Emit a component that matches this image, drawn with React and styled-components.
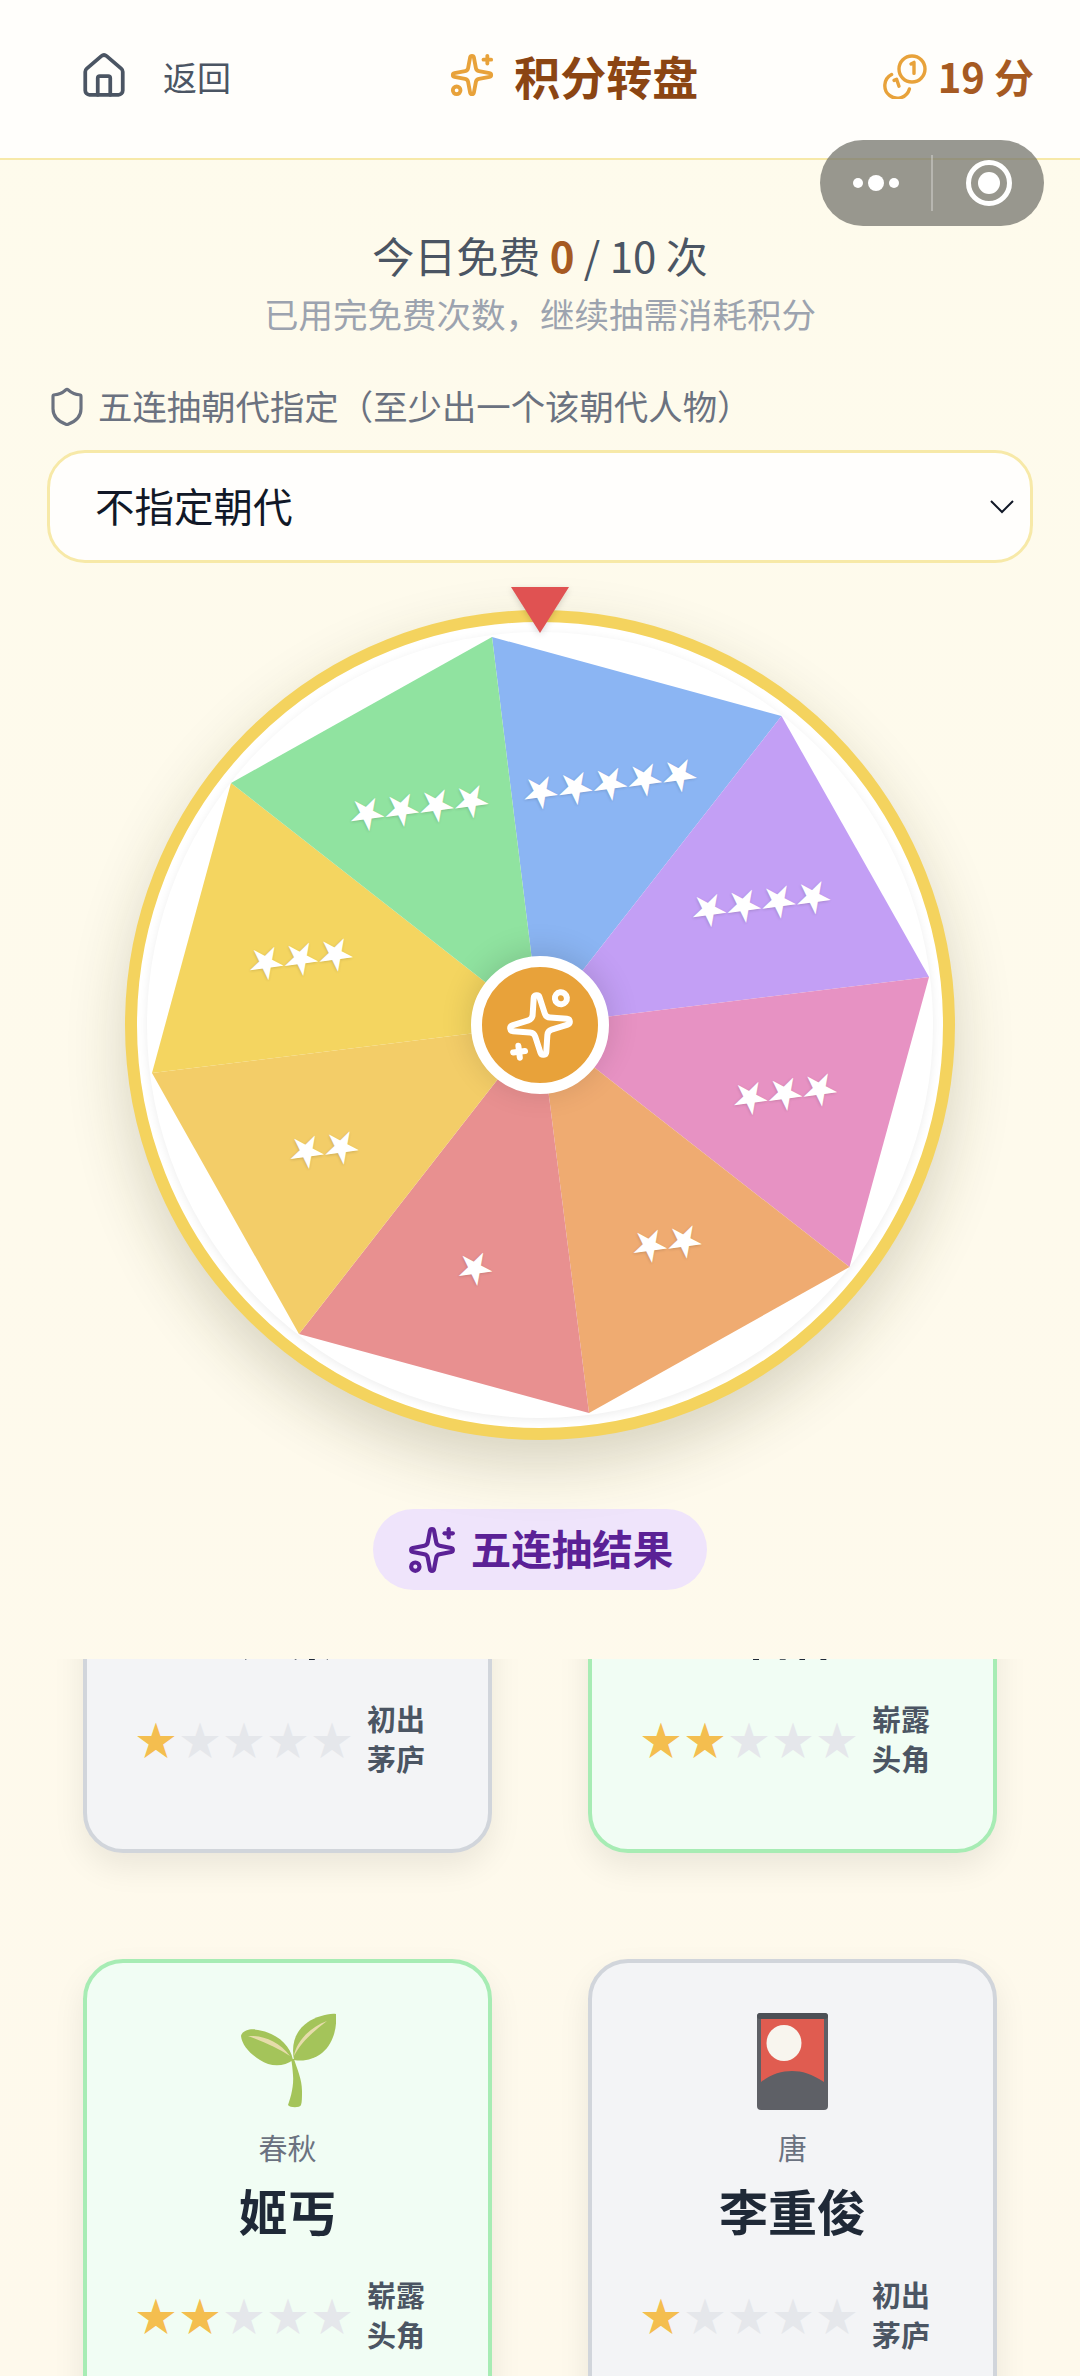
import React from "react";
import styled, { createGlobalStyle } from "styled-components";
import { House, Sparkles, Shield } from "lucide-react";

const FONT = `"Noto Sans CJK SC", "Noto Sans", sans-serif`;

const GlobalStyle = createGlobalStyle`
  html, body {
    margin: 0;
    width: 1080px;
    height: 2376px;
    overflow: hidden;
  }
  body {
    font-family: ${FONT};
    background: linear-gradient(180deg, #fefbec 0%, #fef9ec 100%);
  }
`;

const Page = styled.div`
  position: relative;
  width: 1080px;
  height: 2376px;
  display: flex;
  flex-direction: column;
  overflow: hidden;
`;

const Header = styled.header`
  box-sizing: border-box;
  height: 160px;
  padding: 0 46px 6px 79px;
  display: flex;
  align-items: center;
  justify-content: space-between;
  background: #fffefb;
  border-bottom: 2px solid #f7e9a8;
`;

const BackLink = styled.div`
  display: flex;
  align-items: center;
  gap: 34px;
  width: 186px;
  color: #4b5563;
  font-size: 34px;
  svg {
    flex: none;
  }
`;

const Title = styled.h1`
  margin: 0 0 3px;
  display: flex;
  align-items: center;
  gap: 19px;
  color: #8b4513;
  font-size: 46px;
  line-height: 60px;
  font-weight: 700;
  svg {
    color: #e8a23a;
  }
`;

const Points = styled.div`
  display: flex;
  align-items: center;
  gap: 9px;
  color: #a65a22;
  font-size: 40px;
  font-weight: 700;
  white-space: pre;
`;

const Capsule = styled.div`
  position: absolute;
  left: 820px;
  top: 140px;
  width: 224px;
  height: 86px;
  border-radius: 43px;
  background: rgba(120, 120, 112, 0.76);
  display: flex;
  align-items: center;
`;

const CapsuleSide = styled.div`
  flex: 1;
  height: 56px;
  display: flex;
  align-items: center;
  justify-content: center;
  gap: 5px;
  & + & {
    border-left: 2px solid rgba(255, 255, 255, 0.3);
  }
`;

const Dot = styled.i`
  display: block;
  border-radius: 50%;
  background: #fff;
  width: ${(p) => p.$size}px;
  height: ${(p) => p.$size}px;
`;

const Target = styled.i`
  display: block;
  box-sizing: border-box;
  width: 46px;
  height: 46px;
  border: 5px solid #fff;
  border-radius: 50%;
  position: relative;
  &::after {
    content: "";
    position: absolute;
    inset: 7px;
    border-radius: 50%;
    background: #fff;
  }
`;

const Stats = styled.section`
  padding-top: 69px;
  text-align: center;
`;

const FreeCount = styled.div`
  color: #4b5563;
  font-size: 42px;
  line-height: 52px;
  b {
    color: #a65a22;
    font-weight: 700;
  }
`;

const Hint = styled.div`
  margin-top: 8px;
  color: #9ca3af;
  font-size: 34.5px;
  line-height: 48px;
`;

const FieldLabel = styled.div`
  margin: 45px 0 0 46px;
  height: 46px;
  display: flex;
  align-items: center;
  gap: 10px;
  color: #6b7280;
  font-size: 34.4px;
  white-space: nowrap;
  svg {
    margin-top: 4px;
  }
`;

const Select = styled.div`
  box-sizing: border-box;
  margin: 22px 47px 0 47px;
  height: 113px;
  padding: 0 14px 4px 45px;
  display: flex;
  align-items: center;
  justify-content: space-between;
  background: #fffefc;
  border: 3px solid #f7e9a8;
  border-radius: 38px;
  color: #111827;
  font-size: 39.5px;
  svg {
    margin-top: 4px;
  }
`;

const WheelBox = styled.section`
  position: relative;
  margin: 47px auto 0;
  box-sizing: border-box;
  width: 830px;
  height: 830px;
  border: 12px solid #f4d35e;
  border-radius: 50%;
  background: #fff;
  box-shadow: 0 24px 60px rgba(60, 60, 20, 0.2);
`;

const Disc = styled.div`
  position: absolute;
  inset: 10px;
  border-radius: 50%;
  box-shadow: 0 2px 10px rgba(0, 0, 0, 0.07);
`;

const WheelArt = styled.svg`
  position: absolute;
  inset: -12px;
  width: 830px;
  height: 830px;
`;

const Pointer = styled.div`
  position: absolute;
  left: 374px;
  top: -35px;
  width: 0;
  height: 0;
  border-left: 29px solid transparent;
  border-right: 29px solid transparent;
  border-top: 46px solid #e05252;
  filter: drop-shadow(0 2px 3px rgba(0, 0, 0, 0.15));
`;

const SliceStars = styled.div`
  position: absolute;
  left: ${(p) => p.$x - 125 - 12 + 2.5}px;
  top: ${(p) => p.$y - 610 - 12 - 3}px;
  transform: translate(-50%, -50%) rotate(-7deg);
  display: flex;
`;

const SliceStar = styled.span`
  width: 35px;
  text-align: center;
  color: #fff;
  font-size: 36px;
  line-height: 35px;
  transform: rotate(35deg);
  text-shadow: 0 1px 3px rgba(0, 0, 0, 0.16);
`;

const Hub = styled.div`
  position: absolute;
  left: 334px;
  top: 334px;
  box-sizing: border-box;
  width: 138px;
  height: 138px;
  border: 11.5px solid #fff;
  border-radius: 50%;
  background: #e8a23a;
  color: #fff;
  display: flex;
  align-items: center;
  justify-content: center;
  box-shadow: 0 -4px 32px rgba(0, 0, 0, 0.14);
  svg {
    transform: rotate(173deg);
  }
`;

const ResultTag = styled.div`
  margin: 69px auto 0;
  box-sizing: border-box;
  width: 334px;
  height: 81px;
  padding-bottom: 4px;
  display: flex;
  align-items: center;
  justify-content: center;
  gap: 14px;
  background: #efe4fb;
  border-radius: 41px;
  color: #5b2196;
  font-size: 40.5px;
  font-weight: 700;
  svg {
    margin-top: 4px;
  }
`;

const ScrollArea = styled.div`
  flex: 1;
  margin-top: 69px;
  overflow: hidden;
`;

const CardGrid = styled.div`
  margin-top: -276px;
  padding: 0 83px;
  display: grid;
  grid-template-columns: 409px 409px;
  column-gap: 96px;
  row-gap: 106px;
`;

const Card = styled.article`
  box-sizing: border-box;
  height: 470px;
  padding-top: 50px;
  display: flex;
  flex-direction: column;
  align-items: center;
  border-radius: 40px;
  border: 4px solid ${(p) => (p.$tier === 2 ? "#a7ecb4" : "#d1d5db")};
  background: ${(p) => (p.$tier === 2 ? "#f1fdf4" : "#f3f4f6")};
  box-shadow: 0 14px 32px rgba(0, 0, 0, 0.08);
`;

const CardArt = styled.div`
  height: 96px;
  display: flex;
  align-items: center;
  justify-content: center;
`;

const Era = styled.div`
  margin-top: 18px;
  color: #6b7280;
  font-size: 29px;
  line-height: 40px;
`;

const Name = styled.div`
  margin-top: 11px;
  color: #1f2937;
  font-size: 49px;
  line-height: 64px;
  font-weight: 700;
`;

const Rating = styled.div`
  margin: 32px 14px 0 0;
  height: 80px;
  display: flex;
  align-items: center;
  gap: 13px;
`;

const StarRow = styled.div`
  display: flex;
`;

const Star = styled.span`
  width: 44px;
  text-align: center;
  color: ${(p) => (p.$on ? "#f4be4f" : "#e5e7eb")};
  font-size: 40px;
  line-height: 44px;
`;

const Rank = styled.div`
  width: 60px;
  color: #4b5563;
  font-size: 29px;
  line-height: 40px;
  font-weight: 700;
`;

const Coins = () => (
  <svg width="46" height="46" viewBox="0 0 46 46" fill="none" stroke="#e8a23a" strokeWidth="3.4" strokeLinecap="round" strokeLinejoin="round">
    <circle cx="29" cy="16" r="13" />
    <path d="M28 11l3-1.6 0 11" />
    <path d="M8.6 21.6A12.5 12.5 0 1 0 26.4 36" />
    <path d="M11 27.4l2.6-1.2 2.4 7" />
  </svg>
);

const Sprout = () => (
  <svg width="96" height="96" viewBox="0 0 96 96">
    <path d="M54 46c3 10 8 20 8 32 0 6 0 11-1 14-1 3-11 3-13 0 3-8 6-20 5-30-.4-6-1-12-2-16z" fill="#a4c45a" />
    <path d="M53 47C44 54 30 54 20 47 10 41 2 32 1 23c1-5 9-8 17-6 18 3 32 14 35 30z" fill="#a4c45a" />
    <path d="M54 47c-3-16 1-29 14-38 8-5 20-9 28-8 1 13-2 29-14 39-8 6-18 9-28 7z" fill="#a4c45a" />
    <path d="M8 23c14-1 31 5 42 20-12-8-26-14-42-20z" fill="#e6dcaa" />
    <path d="M54 43c2-13 14-28 33-35-13 10-26 21-33 35z" fill="#e6dcaa" />
  </svg>
);

const FlowerCard = () => (
  <svg width="71" height="97" viewBox="0 0 71 97">
    <rect width="71" height="97" rx="4" fill="#5e6066" />
    <rect y="0" width="71" height="6" rx="3" fill="#4c5056" />
    <path d="M4 6h63v63c-12-8-22-11-32-11S14 61 4 69z" fill="#e05c50" />
    <ellipse cx="27" cy="30" rx="17.5" ry="18" fill="#f8f5ee" />
  </svg>
);

const wheelCenter = "540,1025";
const slices = [
  { pts: "492,637 781.5,716", fill: "#8bb5f3" },
  { pts: "781.5,716 929,977", fill: "#c39ff5" },
  { pts: "929,977 849.5,1267", fill: "#e792c3" },
  { pts: "849.5,1267 589,1413", fill: "#efab71" },
  { pts: "589,1413 299,1334", fill: "#e89090" },
  { pts: "299,1334 152,1073", fill: "#f3cd68" },
  { pts: "152,1073 231,783", fill: "#f4d560" },
  { pts: "231,783 492,637", fill: "#90e3a0" },
];

const sliceStars = [
  { x: 608, y: 783, n: 5 },
  { x: 759, y: 903, n: 4 },
  { x: 783, y: 1093, n: 3 },
  { x: 665, y: 1243, n: 2 },
  { x: 473.5, y: 1268, n: 1 },
  { x: 322, y: 1149, n: 2 },
  { x: 299, y: 958, n: 3 },
  { x: 417, y: 807, n: 4 },
];

const cards = [
  { name: "苏秦", era: "战国", stars: 1, rank: "初出茅庐", art: null },
  { name: "管仲", era: "春秋", stars: 2, rank: "崭露头角", art: null },
  { name: "姬丐", era: "春秋", stars: 2, rank: "崭露头角", art: <Sprout /> },
  { name: "李重俊", era: "唐", stars: 1, rank: "初出茅庐", art: <FlowerCard /> },
];

export default function App() {
  return (
    <Page>
      <GlobalStyle />
      <Header>
        <BackLink>
          <House size={50} strokeWidth={1.8} />
          返回
        </BackLink>
        <Title>
          <Sparkles size={46} strokeWidth={2} />
          积分转盘
        </Title>
        <Points>
          <Coins />
          19 分
        </Points>
      </Header>
      <Capsule>
        <CapsuleSide>
          <Dot $size={10} />
          <Dot $size={16} />
          <Dot $size={10} />
        </CapsuleSide>
        <CapsuleSide>
          <Target />
        </CapsuleSide>
      </Capsule>

      <Stats>
        <FreeCount>
          今日免费 <b>0</b> / 10 次
        </FreeCount>
        <Hint>已用完免费次数，继续抽需消耗积分</Hint>
      </Stats>

      <FieldLabel>
        <Shield size={42} strokeWidth={1.8} />
        五连抽朝代指定（至少出一个该朝代人物）
      </FieldLabel>
      <Select>
        不指定朝代
        <svg width="28" height="16" viewBox="0 0 28 16" fill="none" stroke="#111827" strokeWidth="2">
          <path d="M3 2l11 11L25 2" />
        </svg>
      </Select>

      <WheelBox>
        <Disc />
        <WheelArt viewBox="125 610 830 830">
          {slices.map((s) => (
            <polygon key={s.pts} points={`${wheelCenter} ${s.pts}`} fill={s.fill} />
          ))}
        </WheelArt>
        {sliceStars.map((s) => (
          <SliceStars key={s.x} $x={s.x} $y={s.y}>
            {Array.from({ length: s.n }, (_, i) => (
              <SliceStar key={i}>★</SliceStar>
            ))}
          </SliceStars>
        ))}
        <Hub>
          <Sparkles size={72} strokeWidth={2} />
        </Hub>
        <Pointer />
      </WheelBox>

      <ResultTag>
        <Sparkles size={50} strokeWidth={2} />
        五连抽结果
      </ResultTag>

      <ScrollArea>
        <CardGrid>
          {cards.map((c) => (
            <Card key={c.name} $tier={c.stars}>
              <CardArt>{c.art}</CardArt>
              <Era>{c.era}</Era>
              <Name>{c.name}</Name>
              <Rating>
                <StarRow>
                  {[1, 2, 3, 4, 5].map((i) => (
                    <Star key={i} $on={i <= c.stars}>★</Star>
                  ))}
                </StarRow>
                <Rank>{c.rank}</Rank>
              </Rating>
            </Card>
          ))}
        </CardGrid>
      </ScrollArea>
    </Page>
  );
}
